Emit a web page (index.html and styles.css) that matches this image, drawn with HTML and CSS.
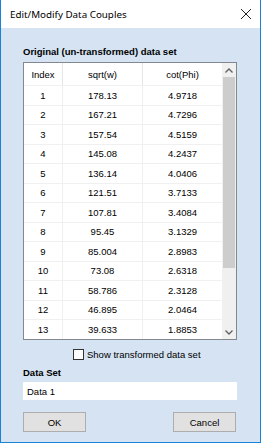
FILE: index.html
```html
<!DOCTYPE html>
<html>
<head>
<meta charset="utf-8">
<link rel="stylesheet" href="styles.css">
</head>
<body>
<div class="window">
  <div class="titlebar">
    <span class="title">Edit/Modify Data Couples</span>
    <svg class="close" width="12" height="12" viewBox="0 0 12 12"><path d="M1 1 L11 11 M11 1 L1 11" stroke="#222" stroke-width="1" fill="none"/></svg>
  </div>
  <div class="content">
    <div class="group-label">Original (un-transformed) data set</div>
    <div class="table">
      <div class="grid">
        <div class="head">
          <div class="c c1">Index</div><div class="c c2">sqrt(w)</div><div class="c c3">cot(Phi)</div>
        </div>
        <div class="row"><div class="c c1">1</div><div class="c c2">178.13</div><div class="c c3">4.9718</div></div>
        <div class="row"><div class="c c1">2</div><div class="c c2">167.21</div><div class="c c3">4.7296</div></div>
        <div class="row"><div class="c c1">3</div><div class="c c2">157.54</div><div class="c c3">4.5159</div></div>
        <div class="row"><div class="c c1">4</div><div class="c c2">145.08</div><div class="c c3">4.2437</div></div>
        <div class="row"><div class="c c1">5</div><div class="c c2">136.14</div><div class="c c3">4.0406</div></div>
        <div class="row"><div class="c c1">6</div><div class="c c2">121.51</div><div class="c c3">3.7133</div></div>
        <div class="row"><div class="c c1">7</div><div class="c c2">107.81</div><div class="c c3">3.4084</div></div>
        <div class="row"><div class="c c1">8</div><div class="c c2">95.45</div><div class="c c3">3.1329</div></div>
        <div class="row"><div class="c c1">9</div><div class="c c2">85.004</div><div class="c c3">2.8983</div></div>
        <div class="row"><div class="c c1">10</div><div class="c c2">73.08</div><div class="c c3">2.6318</div></div>
        <div class="row"><div class="c c1">11</div><div class="c c2">58.786</div><div class="c c3">2.3128</div></div>
        <div class="row"><div class="c c1">12</div><div class="c c2">46.895</div><div class="c c3">2.0464</div></div>
        <div class="row"><div class="c c1">13</div><div class="c c2">39.633</div><div class="c c3">1.8853</div></div>
      </div>
      <div class="scrollbar">
        <div class="arrow"><svg width="8" height="5" viewBox="0 0 8 5"><path d="M0.5 4.5 L4 1 L7.5 4.5" stroke="#606060" stroke-width="1.3" fill="none"/></svg></div>
        <div class="track"><div class="thumb"></div></div>
        <div class="arrow"><svg width="8" height="5" viewBox="0 0 8 5"><path d="M0.5 0.5 L4 4 L7.5 0.5" stroke="#606060" stroke-width="1.3" fill="none"/></svg></div>
      </div>
    </div>
    <label class="check"><span class="box"></span><span>Show transformed data set</span></label>
    <div class="field-label">Data Set</div>
    <div class="input">Data 1</div>
    <div class="buttons">
      <div class="btn">OK</div>
      <div class="btn">Cancel</div>
    </div>
  </div>
</div>
</body>
</html>
```
FILE: styles.css
```css
* { box-sizing: border-box; }
html, body { margin: 0; padding: 0; }
body {
  width: 261px;
  height: 443px;
  overflow: hidden;
  font-family: "Liberation Sans", Arial, sans-serif;
  font-size: 9.5px;
  color: #000;
}
.window {
  width: 261px;
  height: 443px;
  display: flex;
  flex-direction: column;
  border-left: 1px solid #1883d7;
  border-right: 1px solid #1883d7;
  border-bottom: 1px solid #1883d7;
  background: #d5e3f2;
}
.titlebar {
  height: 28px;
  background: #fff;
  display: flex;
  align-items: center;
  justify-content: space-between;
  padding: 0 8px 0 9px;
}
.title {
  font-family: "Noto Sans", "Open Sans", sans-serif;
  font-size: 9.8px;
  color: #000;
}
.close { display: block; }
.content {
  flex: 1;
  display: flex;
  flex-direction: column;
  padding: 18px 23px 0 22px;
}
.group-label {
  font-weight: bold;
  line-height: 12px;
  height: 12px;
}
.table {
  margin-top: 4px;
  height: 278px;
  border: 1px solid #828790;
  background: #fff;
  display: flex;
}
.grid {
  width: 198px;
  display: flex;
  flex-direction: column;
}
.head, .row {
  display: flex;
}
.head { height: 22px; }
.row { height: 19.5px; border-top: 1px solid #f0f0f0; }
.c {
  display: flex;
  align-items: center;
  justify-content: center;
}
.c1 { width: 38px; }
.c2 { width: 80px; border-left: 1px solid #f0f0f0; }
.c3 { width: 80px; border-left: 1px solid #f0f0f0; }
.head .c2, .head .c3 { border-left-color: #e5e5e5; }
.scrollbar {
  width: 14px;
  background: #f0f0f0;
  display: flex;
  flex-direction: column;
}
.arrow {
  height: 14px;
  display: flex;
  align-items: center;
  justify-content: center;
}
.arrow svg { display: block; }
.track {
  flex: 1;
  display: flex;
  flex-direction: column;
}
.thumb {
  margin: 0 1px;
  height: 191px;
  background: #cdcdcd;
}
.check {
  margin-top: 9px;
  height: 11px;
  display: flex;
  align-items: center;
  gap: 3px;
  line-height: 11px;
  padding-left: 50px;
}
.box {
  width: 11px;
  height: 11px;
  border: 1px solid #333;
  background: #fff;
}
.field-label {
  margin-top: 7px;
  font-weight: bold;
  line-height: 12px;
  height: 12px;
}
.input {
  margin-top: 3px;
  height: 18px;
  background: #fff;
  display: flex;
  align-items: center;
  padding-left: 4px;
}
.buttons {
  margin-top: 12px;
  display: flex;
  justify-content: space-between;
  padding-right: 1px;
}
.btn {
  width: 63px;
  height: 20px;
  background: #e1e1e1;
  border: 1px solid #adadad;
  display: flex;
  align-items: center;
  justify-content: center;
}
```
